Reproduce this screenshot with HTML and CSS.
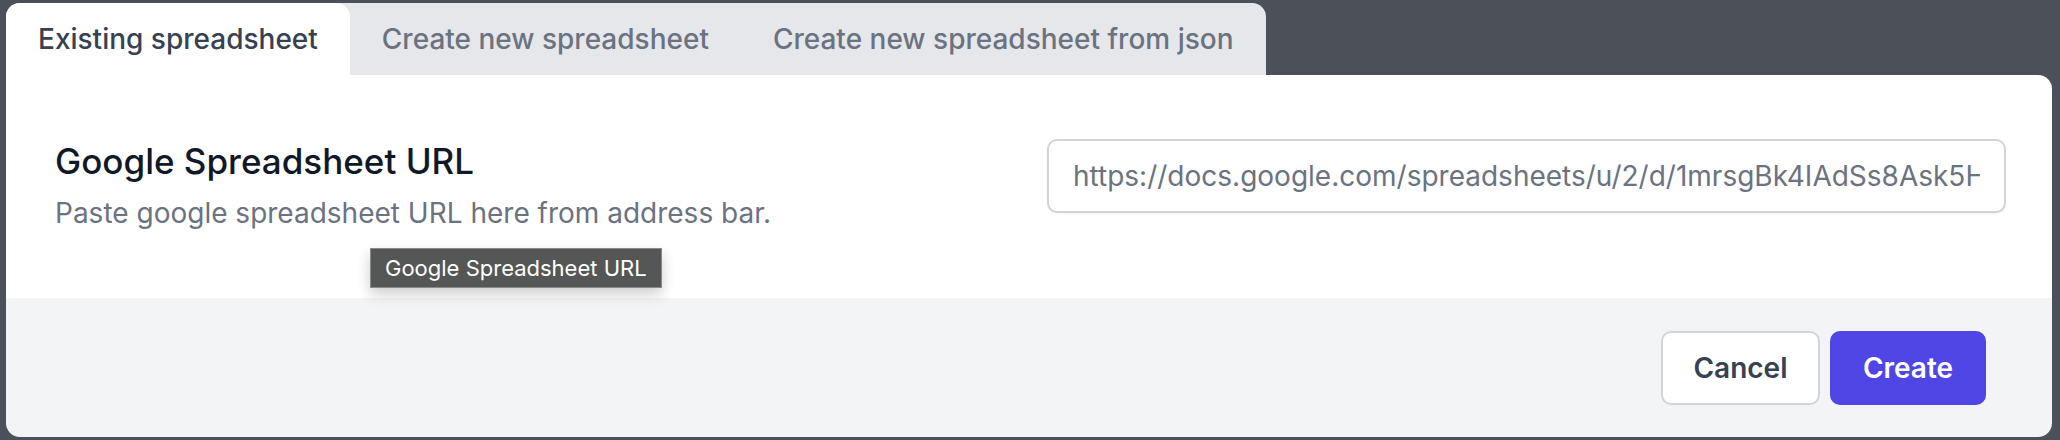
FILE: index.html
```html
<!DOCTYPE html>
<html lang="en">
<head>
    <meta charset="UTF-8">
    <meta name="viewport" content="width=device-width, initial-scale=1.0">
    <title>Import spreadsheet</title>
    <link rel="stylesheet" href="styles.css">
</head>
<body>
    <div class="modal">
        <div class="tabs">
            <button class="tab active">Existing spreadsheet</button>
            <button class="tab">Create new spreadsheet</button>
            <button class="tab">Create new spreadsheet from json</button>
        </div>
        <div class="panel">
            <div class="field-text">
                <h2 class="field-title">Google Spreadsheet URL</h2>
                <p class="field-help">Paste google spreadsheet URL here from address bar.</p>
            </div>
            <input type="text" class="url-input" value="https://docs.google.com/spreadsheets/u/2/d/1mrsgBk4IAdSs8Ask5HbZ7" title="Google Spreadsheet URL">
            <div class="tooltip">Google Spreadsheet URL</div>
        </div>
        <div class="footer">
            <button class="btn btn-cancel">Cancel</button>
            <button class="btn btn-create">Create</button>
        </div>
    </div>
</body>
</html>
```

FILE: styles.css
```css
body {
    margin: 0;
    height: 440px;
    overflow: hidden;
    background-color: #4b5059;
    font-family: Inter, "Noto Sans", sans-serif;
}
.modal {
    margin: 3px 0 0 6px;
    width: 2046px;
}
.tabs {
    display: inline-flex;
    background-color: #e5e7eb;
    border-radius: 14px 14px 0 0;
    height: 72px;
}
.tab {
    border: none;
    background: transparent;
    padding: 0 32px;
    font-family: inherit;
    font-size: 28px;
    font-weight: 500;
    color: #6b7280;
    border-radius: 14px 14px 0 0;
    cursor: pointer;
}
.tab.active {
    background-color: #fff;
    color: #374151;
}
.panel {
    position: relative;
    display: flex;
    justify-content: space-between;
    align-items: flex-start;
    height: 223px;
    box-sizing: border-box;
    padding: 0 46px 0 49px;
    background-color: #fff;
    border-radius: 0 14px 0 0;
}
.field-text {
    margin-top: 66px;
}
.field-title {
    margin: 0;
    font-size: 35px;
    line-height: 40px;
    font-weight: 500;
    color: #111827;
}
.field-help {
    margin: 16px 0 0;
    font-size: 28px;
    line-height: 32px;
    color: #6b7280;
}
.url-input {
    margin-top: 64px;
    width: 959px;
    height: 74px;
    box-sizing: border-box;
    padding: 0 24px;
    border: 2px solid #d1d5db;
    border-radius: 10px;
    font-family: inherit;
    font-size: 28px;
    color: #6b7280;
    box-shadow: 0 1px 2px rgba(0, 0, 0, 0.05);
}
.tooltip {
    position: absolute;
    left: 364px;
    top: 173px;
    height: 38px;
    padding: 0 14px;
    line-height: 38px;
    background-color: #555756;
    border: 1px solid #8a8a8a;
    color: #fff;
    font-size: 22px;
    box-shadow: 0 6px 14px rgba(0, 0, 0, 0.2);
}
.footer {
    display: flex;
    justify-content: flex-end;
    gap: 10px;
    padding: 33px 66px 32px 0;
    background-color: #f3f4f6;
    border-radius: 0 0 14px 14px;
}
.btn {
    height: 74px;
    border-radius: 10px;
    font-family: inherit;
    font-size: 28px;
    font-weight: 600;
    cursor: pointer;
}
.btn-cancel {
    width: 159px;
    background-color: #fff;
    color: #374151;
    border: 2px solid #d1d5db;
}
.btn-create {
    width: 156px;
    background-color: #4f46e5;
    color: #fff;
    border: none;
}
```
